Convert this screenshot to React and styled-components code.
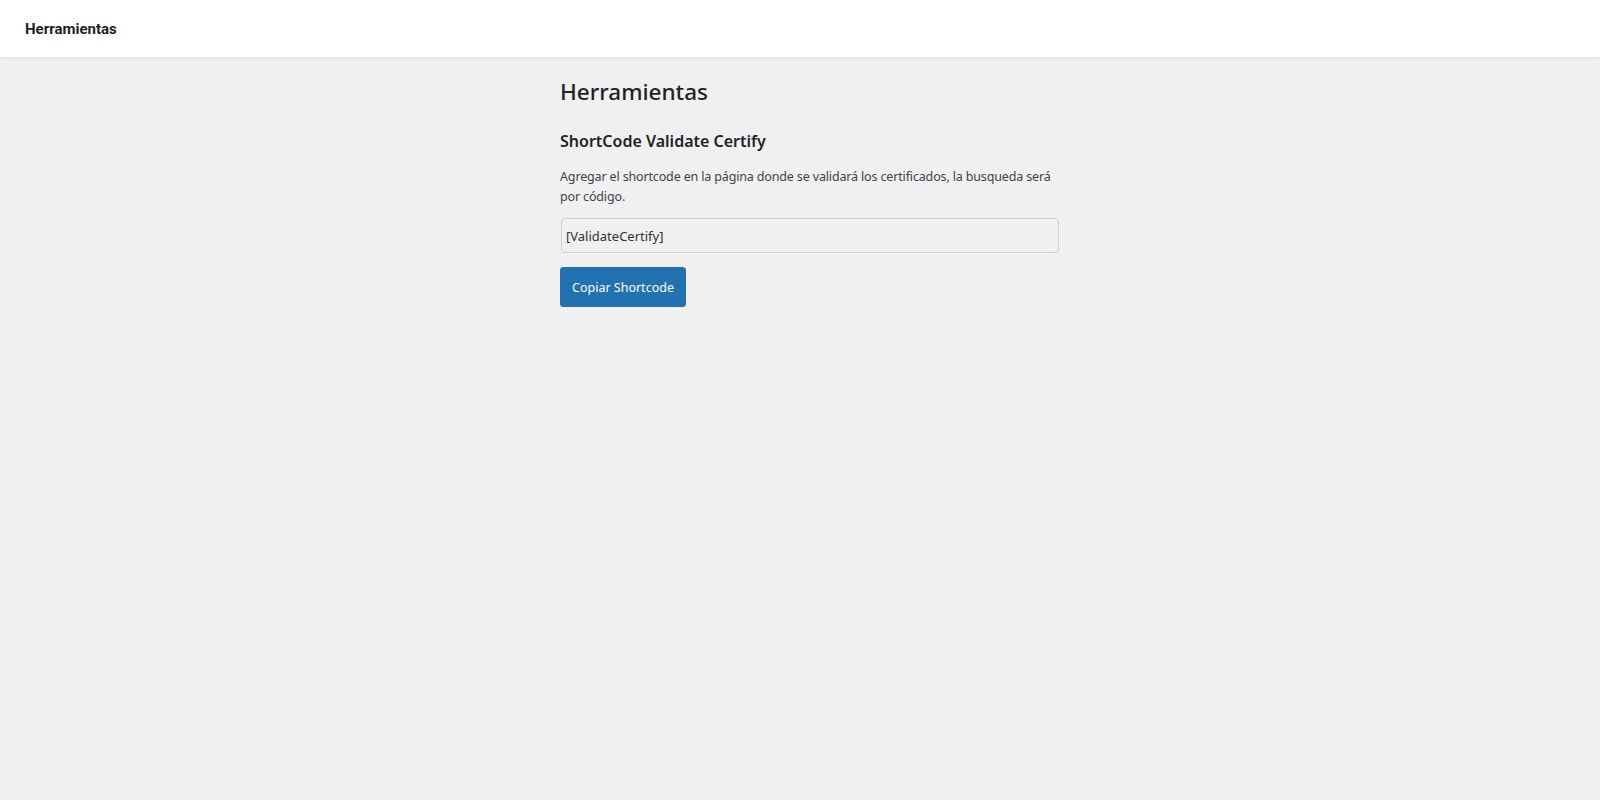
import React, { useRef, useState } from "react";
import styled, { createGlobalStyle } from "styled-components";

const GlobalStyle = createGlobalStyle`
  html, body {
    margin: 0;
    padding: 0;
    background: #f0f0f1;
  }
  body {
    font-family: "Noto Sans", "Open Sans", sans-serif;
    color: #3c434a;
  }
`;

const Page = styled.div`
  min-height: 800px;
  background: #f0f0f1;
`;

const TopBar = styled.header`
  height: 58px;
  background: #fff;
  display: flex;
  align-items: center;
  padding: 0 25px;
  box-shadow: 0 1px 2px rgba(0, 0, 0, 0.06);
  border-bottom: 1px solid #e8e8e8;
  box-sizing: border-box;
`;

const TopTitle = styled.div`
  font-family: Roboto, "Noto Sans", sans-serif;
  font-weight: 700;
  font-size: 15px;
  color: #1e1e1e;
`;

const Wrap = styled.div`
  padding-left: 20px;
`;

const Content = styled.main`
  width: 500px;
  margin: 0 auto;
`;

const Title = styled.h1`
  margin: 19px 0 0;
  font-size: 22.5px;
  line-height: 30px;
  font-weight: 500;
  color: #1d2327;
`;

const SectionTitle = styled.h2`
  margin: 22px 0 0;
  font-size: 16px;
  line-height: 1.5;
  font-weight: 600;
  color: #1d2327;
`;

const Text = styled.p`
  margin: 14px 0 0;
  font-size: 12.5px;
  letter-spacing: -0.15px;
  line-height: 19.5px;
  color: #3c434a;
`;

const CodeField = styled.input`
  display: block;
  box-sizing: border-box;
  width: calc(100% - 2px);
  margin: 12px 1px 0;
  height: 35px;
  padding: 0 4px;
  border: 1px solid #cfcfcf;
  border-radius: 4px;
  background: #f0f0f1;
  font-family: "Noto Sans", sans-serif;
  font-size: 13px;
  color: #2c3338;
  outline: none;
`;

const CopyButton = styled.button`
  margin-top: 14px;
  height: 40px;
  padding: 0 11px;
  border: 1px solid #2271b1;
  border-radius: 3px;
  background: #2271b1;
  color: #fff;
  font-family: "Noto Sans", sans-serif;
  font-size: 12.5px;
  cursor: pointer;
  &:hover {
    background: #135e96;
  }
`;

const App = () => {
  const fieldRef = useRef(null);
  const [copied, setCopied] = useState(false);

  const copyHandler = () => {
    if (fieldRef.current) {
      fieldRef.current.select();
      try {
        document.execCommand("copy");
      } catch (e) {}
    }
    setCopied(true);
  };

  return (
    <Page>
      <GlobalStyle />
      <TopBar>
        <TopTitle>Herramientas</TopTitle>
      </TopBar>
      <Wrap>
        <Content>
          <Title>Herramientas</Title>
          <SectionTitle>ShortCode Validate Certify</SectionTitle>
          <Text>
            Agregar el shortcode en la página donde se validará los
            certificados, la busqueda será por código.
          </Text>
          <CodeField ref={fieldRef} readOnly value="[ValidateCertify]" />
          <CopyButton type="button" onClick={copyHandler}>
            Copiar Shortcode
          </CopyButton>
        </Content>
      </Wrap>
    </Page>
  );
};

export default App;
